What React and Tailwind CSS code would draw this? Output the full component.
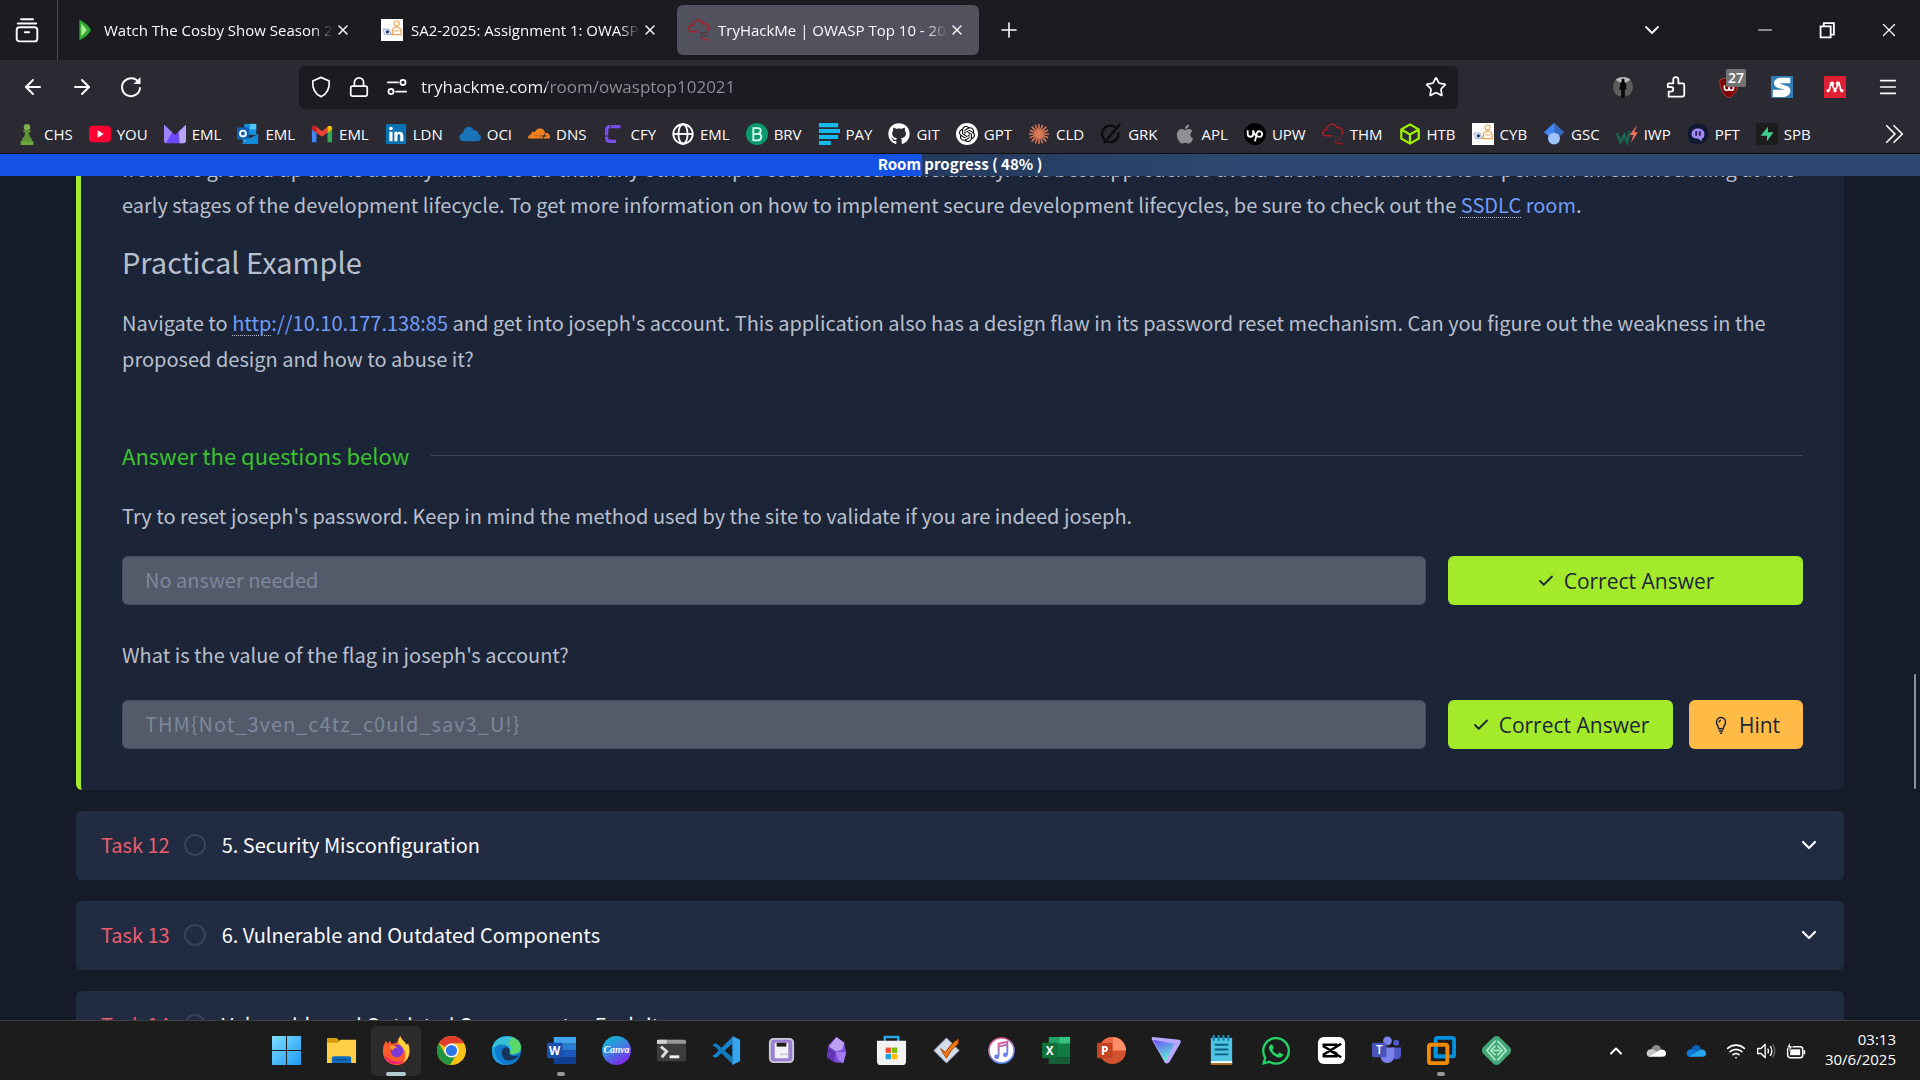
import React from "react";
import { FaApple, FaCloudflare, FaGithub, FaWhatsapp } from "react-icons/fa6";
import { SiOpenai } from "react-icons/si";
import {
  ArrowLeft,
  ArrowRight,
  Check,
  ChevronDown,
  ChevronUp,
  Lock,
  Menu,
  Minus,
  Plus,
  Star,
  Wifi,
  X,
} from "lucide-react";

/* ---------- small drawings ---------- */

function Svg({ box = 24, className = "size-[22px]", children }) {
  return (
    <svg viewBox={`0 0 ${box} ${box}`} className={className} fill="none" aria-hidden="true">
      {children}
    </svg>
  );
}

const PlayTabIcon = () => (
  <Svg>
    <path d="M6 1C12 4 18 9 18 12C18 15 12 20 6 23Z" fill="#35a838" stroke="#1d7c22" />
    <path d="M8 5L14 12L8 19Z" fill="#a5f08c" />
  </Svg>
);

const CourseIcon = () => (
  <Svg>
    <path d="M0 0H24V24H0Z" fill="#fff" />
    <circle cx="17" cy="5" r="2.800" stroke="#f0a04b" strokeWidth="1.200" />
    <path d="M13 16C11 11 14 9 17 9S23 11 22 17H12L9 14" stroke="#f0a04b" strokeWidth="1.300" />
    <path d="M2 11H9L11 17H4Z" fill="#dbe5f2" stroke="#9db1cc" />
    <circle cx="7" cy="14" r="1.800" fill="#1e3a72" />
    <path d="M14 13H20" stroke="#f0a04b" />
  </Svg>
);

const ThmIcon = () => (
  <Svg>
    <path
      d="M11 14H5C-1 14 0 7 5 7C6 0 15 0 16 5C22 4 24 10 21 13"
      stroke="#a81f28"
      strokeWidth="1.600"
    />
    <path d="M13 15H21M14 18H22" stroke="#563036" strokeWidth="1.600" strokeDasharray="2 1" />
    <path d="M14 20L18 22L23 23" stroke="#a81f28" strokeWidth="1.400" strokeDasharray="3 1" />
  </Svg>
);

const PawnIcon = () => (
  <Svg>
    <circle cx="12" cy="4.500" r="3.500" fill="#7fb24a" />
    <path d="M8 8H16V10H14C14 15 18 17 18 20V23H6V20C6 17 10 15 10 10H8Z" fill="#5f9335" />
    <path d="M5 20H19V24H5Z" fill="#6ea53f" />
  </Svg>
);

const YouTubeIcon = () => (
  <Svg>
    <rect x="0" y="3" width="24" height="18" rx="4" fill="#ff0033" />
    <path d="M9.500 8L16 12L9.500 16Z" fill="#fff" />
  </Svg>
);

const ProtonMailIcon = () => (
  <Svg>
    <path d="M0 2L12 13L24 2V19C24 21 23 22 21 22H3C1 22 0 21 0 19Z" fill="#6d4aff" />
    <path d="M16 9.500L24 2V19C24 21 23 22 21 22H17Z" fill="#b9a5f7" />
    <path d="M0 2L9 10L2 22C1 22 0 21 0 19Z" fill="#9b83f5" />
  </Svg>
);

const OutlookIcon = () => (
  <Svg>
    <path d="M8 1H21V13H8Z" fill="#1490df" />
    <path d="M14 1H21V7H14Z" fill="#50c7f5" />
    <path d="M5 12L14 17L23 12V22H7Z" fill="#28a8ea" />
    <path d="M5 22L23 12V23H7Z" fill="#1688d9" />
    <rect x="0" y="5" width="13" height="13" rx="1" fill="#0f64b5" />
    <circle cx="6.500" cy="11.500" r="3.200" stroke="#fff" strokeWidth="2" />
  </Svg>
);

const GmailIcon = () => (
  <Svg>
    <path d="M1 5V21H6V9Z" fill="#4285f4" />
    <path d="M18 9V21H23V5Z" fill="#34a853" />
    <path d="M1 5C1 3 4 2 6 4L12 9L18 4V10L12 15L1 7Z" fill="#ea4335" />
    <path d="M18 4C20 2 23 3 23 5V7L18 11Z" fill="#fbbc04" />
    <path d="M1 5C1 3 4 2 6 4V11L1 7Z" fill="#c5221f" />
  </Svg>
);

const LinkedInIcon = () => (
  <Svg>
    <rect x="1" y="1" width="22" height="22" rx="1" fill="#0a72b1" />
    <circle cx="6.500" cy="6" r="2" fill="#fff" />
    <path
      d="M4.800 9.500H8.200V20H4.800ZM10.200 9.500H13.400V11C15 8.500 20 8.700 20 14V20H16.600V14.500C16.600 11 13.600 11.500 13.600 14.500V20H10.200Z"
      fill="#fff"
    />
  </Svg>
);

const CloudIcon = () => (
  <Svg>
    <path d="M5.500 20C-1 20-1 11.500 4.500 11C5 3 14 2 16 8C20 7.500 21 10 21 12C25.500 13 24.500 20 20 20Z" fill="#1a73b8" />
  </Svg>
);

const ClockifyIcon = () => (
  <Svg>
    <path
      d="M20 4H9Q5 4 5 8V16Q5 20 9 20H20"
      stroke="#7a4df0"
      strokeWidth="3.600"
      strokeDasharray="10 1 12 1 14"
    />
  </Svg>
);

const GlobeIcon = () => (
  <Svg>
    <g stroke="#fff" strokeWidth="2">
      <circle cx="12" cy="12" r="10.600" />
      <ellipse cx="12" cy="12" rx="5" ry="10.600" />
      <path d="M1.500 12H22.500" />
    </g>
  </Svg>
);

const BrevoIcon = () => (
  <Svg>
    <circle cx="12" cy="12" r="12" fill="#0b996e" />
    <path d="M8 5.500H13C17 5.500 17 10 14 11.500C18.500 13 17 19 12.500 19H8ZM8 12.500L14 11.500" stroke="#d9fff0" strokeWidth="2" />
  </Svg>
);

const PayIcon = () => (
  <Svg>
    <path d="M1 0H22V4.500H1ZM1 6.500H24V11H1ZM1 13H22V17.500H1ZM1 19.500H14V24H1Z" fill="#14b9ee" />
  </Svg>
);

const GptIcon = () => (
  <span className="flex size-[22px] items-center justify-center rounded-full bg-white text-black">
    <SiOpenai className="size-4" />
  </span>
);

const ClaudeIcon = () => (
  <Svg>
    <g stroke="#d97757" strokeWidth="1.700">
      <path d="M12 1V23M1 12H23M4 4L20 20M20 4L4 20M8 2L16 22M16 2L8 22M2 8L22 16M2 16L22 8" />
    </g>
  </Svg>
);

const GrokIcon = () => (
  <Svg>
    <path d="M17 5A9 9 0 1 0 20 10M4 22L22 1" stroke="#0c0c0f" strokeWidth="2.600" />
  </Svg>
);

const UpworkIcon = () => (
  <Svg>
    <circle cx="12" cy="12" r="12" fill="#000" />
    <path
      d="M4 8V12A3 3 0 0 0 10 12V8C11 13 13 14 14 15M12 20L14 11A3 3 0 1 1 16 15Q14 15 12 12"
      stroke="#fff"
      strokeWidth="2"
    />
  </Svg>
);

const HtbIcon = () => (
  <Svg>
    <path d="M12 1.500L21.500 7V17L12 22.500L2.500 17V7ZM2.500 7L12 12.500L21.500 7M12 12.500V22" stroke="#9fef00" strokeWidth="2.500" strokeLinejoin="round" />
  </Svg>
);

const ScholarIcon = () => (
  <Svg>
    <path d="M12 0L23 10L17 15H7L1 10Z" fill="#4285f4" />
    <path d="M12 0L23 10L17 15L12 9Z" fill="#356ac3" />
    <circle cx="12" cy="17" r="6.500" fill="#a0c3ff" />
  </Svg>
);

const IwpIcon = () => (
  <Svg>
    <path d="M1 11L5 21L9 13L12 21L15 9" stroke="#1c6350" strokeWidth="3" />
    <path d="M23 2L15 13H19L16 22L24 10H20Z" fill="#f2705c" />
  </Svg>
);

const PftIcon = () => (
  <Svg>
    <circle cx="12" cy="12" r="11.500" fill="#111a33" />
    <path d="M5 12C5 4 19 4 19 12C19 16 17 17 16 17V20L12 17C8 17 5 16 5 12Z" fill="#a18af3" />
    <path d="M10 9V14M14 9V14" stroke="#2b2157" strokeWidth="2" />
  </Svg>
);

const SupabaseIcon = () => (
  <Svg>
    <rect width="24" height="24" rx="2" fill="#1c1c1c" />
    <path d="M13 4L5 14H12V20L19 10H13Z" fill="#3ecf8e" />
  </Svg>
);

/* ---------- data ---------- */

const tabs = [
  { title: "Watch The Cosby Show Season 2", Icon: PlayTabIcon },
  { title: "SA2-2025: Assignment 1: OWASP", Icon: CourseIcon },
  { title: "TryHackMe | OWASP Top 10 - 2021", Icon: ThmIcon, active: true },
];

const bookmarks = [
  { name: "CHS", icon: <PawnIcon /> },
  { name: "YOU", icon: <YouTubeIcon /> },
  { name: "EML", icon: <ProtonMailIcon /> },
  { name: "EML", icon: <OutlookIcon /> },
  { name: "EML", icon: <GmailIcon /> },
  { name: "LDN", icon: <LinkedInIcon /> },
  { name: "OCI", icon: <CloudIcon /> },
  { name: "DNS", icon: <FaCloudflare className="size-[22px] text-[#f38020]" /> },
  { name: "CFY", icon: <ClockifyIcon /> },
  { name: "EML", icon: <GlobeIcon /> },
  { name: "BRV", icon: <BrevoIcon /> },
  { name: "PAY", icon: <PayIcon /> },
  { name: "GIT", icon: <FaGithub className="size-[22px] text-white" /> },
  { name: "GPT", icon: <GptIcon /> },
  { name: "CLD", icon: <ClaudeIcon /> },
  { name: "GRK", icon: <GrokIcon /> },
  { name: "APL", icon: <FaApple className="size-[22px] text-[#8e8e93]" /> },
  { name: "UPW", icon: <UpworkIcon /> },
  { name: "THM", icon: <ThmIcon /> },
  { name: "HTB", icon: <HtbIcon /> },
  { name: "CYB", icon: <CourseIcon /> },
  { name: "GSC", icon: <ScholarIcon /> },
  { name: "IWP", icon: <IwpIcon /> },
  { name: "PFT", icon: <PftIcon /> },
  { name: "SPB", icon: <SupabaseIcon /> },
];

const tasks = [
  { label: "Task 12", title: "5. Security Misconfiguration" },
  { label: "Task 13", title: "6. Vulnerable and Outdated Components" },
  { label: "Task 14", title: "Vulnerable and Outdated Components - Exploit" },
];

/* ---------- browser ---------- */

function TabStrip() {
  return (
    <div className="flex h-[60px] shrink-0 items-center bg-[#1c1b22] text-[#fbfbfe]">
      <button aria-label="Recent browsing" className="flex h-full w-[58px] items-center justify-center border-r border-[#4a4a55] pr-1">
        <Svg className="size-[26px]">
          <g stroke="#fbfbfe" strokeWidth="1.800" strokeLinecap="round">
            <rect x="2.500" y="9.500" width="19" height="13" rx="2.500" />
            <path d="M3.500 6H20.500M6.500 2H17.500M10 14H14" />
          </g>
        </Svg>
      </button>
      <div className="flex gap-[5px] pl-[5px]">
        {tabs.map(({ title, Icon, active }) => (
          <div
            key={title}
            className={`flex h-[50px] w-[302px] items-center rounded-md pl-[11px] pr-[14px] ${active ? "bg-[#52525e] shadow" : ""}`}
          >
            <Icon />
            <a
              href="#tab"
              className="ml-2 mr-[2px] min-w-0 flex-1 overflow-hidden whitespace-nowrap text-[15px] leading-6 [mask-image:linear-gradient(to_right,black_91%,transparent)]"
            >
              {title}
            </a>
            <button aria-label="Close tab">
              <X className="size-4" strokeWidth={2} />
            </button>
          </div>
        ))}
      </div>
      <button aria-label="New tab" className="ml-[18px]">
        <Plus className="size-6" strokeWidth={1.6} />
      </button>
      <div className="ml-auto flex items-center pr-5">
        <button aria-label="List all tabs" className="mr-[90px]">
          <ChevronDown className="size-6" strokeWidth={1.8} />
        </button>
        <button aria-label="Minimize" className="mr-10">
          <Minus className="size-[22px]" strokeWidth={1.2} />
        </button>
        <button aria-label="Restore" className="mr-10">
          <Svg>
            <path d="M5 8H16V20H5ZM8.500 8V4.500H19.500V17H16" stroke="#fff" strokeWidth="2" />
          </Svg>
        </button>
        <button aria-label="Close window">
          <X className="size-[22px]" strokeWidth={1.4} />
        </button>
      </div>
    </div>
  );
}

function NavBar() {
  return (
    <div className="flex h-[54px] shrink-0 items-center bg-[#2b2a33] px-[21px] text-[#fbfbfe]">
      <div className="flex w-[278px] gap-[25px]">
        <button aria-label="Back">
          <ArrowLeft className="size-6" strokeWidth={2} />
        </button>
        <button aria-label="Forward">
          <ArrowRight className="size-6" strokeWidth={2} />
        </button>
        <button aria-label="Reload">
          <Svg className="size-6">
            <path d="M20 8A9 9 0 1 0 21 13" stroke="#fbfbfe" strokeWidth="2" strokeLinecap="round" />
            <path d="M21.500 2V9H14.500Z" fill="#fbfbfe" />
          </Svg>
        </button>
      </div>
      <div className="flex h-[43px] flex-1 items-center rounded-md bg-[#1c1b22] px-[11px]">
        <Svg>
          <path
            d="M12 1.500L21 5.500C21.500 14 18 20 12 22.500C6 20 2.500 14 3 5.500Z"
            stroke="#fbfbfe"
            strokeWidth="1.800"
            strokeLinejoin="round"
          />
        </Svg>
        <Lock className="ml-4 size-[22px]" strokeWidth={1.9} />
        <Svg className="ml-4 size-[22px]">
          <g stroke="#fbfbfe" strokeWidth="2" strokeLinecap="round">
            <path d="M2 7H13M11 17H22" />
            <circle cx="18.500" cy="7" r="2.800" />
            <circle cx="5.500" cy="17" r="2.800" />
          </g>
        </Svg>
        <input
          type="text"
          aria-label="Address"
          readOnly
          value="tryhackme.com/room/owasptop102021"
          className="ml-[13px] min-w-0 flex-1 bg-[linear-gradient(to_right,#fbfbfe_125px,#8f8f9b_125px)] bg-clip-text text-[17px] text-transparent outline-none"
        />
        <button aria-label="Bookmark this page">
          <Star className="size-[22px]" strokeWidth={1.9} />
        </button>
      </div>
      <div className="flex w-[441px] shrink-0 items-center justify-end gap-[31px]">
        <button aria-label="Profile extension">
          <Svg>
            <circle cx="12" cy="12" r="11" fill="#5d5d5d" />
            <path d="M4 4C8 0 16 0 20 4L12 9Z" fill="#bbb" />
            <path d="M9 9C9 7 10 7 10.500 6V3H13.500V6C14 7 15 7 15.500 9V15H14V24H10V15H8Z" fill="#080808" />
          </Svg>
        </button>
        <button aria-label="Extensions">
          <Svg>
            <path
              d="M4 22.500V17H6.500A2.500 2.500 0 0 0 6.500 12H3V9.500Q3 8 4.500 8H9V4A2.800 2.800 0 0 1 14.600 4V8H19.500Q21 8 21 9.500V20Q21 22.500 19 22.500Z"
              stroke="#fbfbfe"
              strokeWidth="2"
              strokeLinejoin="round"
            />
          </Svg>
        </button>
        <button aria-label="uBlock" className="relative">
          <Svg>
            <path d="M12 1L22 4C22 15 19 20 12 24C5 20 2 15 2 4Z" fill="#800000" stroke="#a44" />
            <path d="M7 10V13A2.500 2.500 0 0 0 12 13V10M12 13A2.500 2.500 0 0 0 17 13A3 3 0 0 0 14 10" stroke="#fff" strokeWidth="1.700" />
          </Svg>
          <span className="absolute -top-[7px] left-2 rounded-xs bg-[#737373] px-[2px] text-[14px] leading-[18px] font-semibold">27</span>
        </button>
        <button aria-label="Scribe">
          <Svg>
            <rect width="24" height="24" fill="#2f7eb8" />
            <path d="M21 2H10C2 3 1 11 8 13L15 15H2V23H14C23 22 23 12 17 11L9 8H21Z" fill="#fff" />
          </Svg>
        </button>
        <button aria-label="Mendeley">
          <Svg>
            <rect width="24" height="24" fill="#e01f33" />
            <circle cx="8.700" cy="8.500" r="2.500" fill="#fff" />
            <circle cx="15.300" cy="8.500" r="2.500" fill="#fff" />
            <path d="M6.500 10Q7 14 5 16M17.500 10Q17 14 19 16M8.700 10L12 15.500L15.300 10" stroke="#fff" strokeWidth="1.800" />
            <circle cx="4.500" cy="16" r="1.800" fill="#fff" />
            <circle cx="12" cy="16" r="1.800" fill="#fff" />
            <circle cx="19.500" cy="16" r="1.800" fill="#fff" />
          </Svg>
        </button>
        <button aria-label="Menu">
          <Menu className="size-[22px]" strokeWidth={1.8} />
        </button>
      </div>
    </div>
  );
}

function BookmarksBar() {
  return (
    <nav className="flex h-10 shrink-0 items-center border-b border-[#0c0c0d] bg-[#2b2a33] pt-px pl-4 pr-[15px] text-[15px] text-[#fbfbfe]">
      <div className="flex flex-1 gap-4">
        {bookmarks.map(({ name, icon }, i) => (
          <a key={i} href="#bookmark" className="flex items-center gap-[6px]">
            {icon}
            {name}
          </a>
        ))}
      </div>
      <button aria-label="More bookmarks">
        <Svg>
          <path d="M4 3L13 12L4 21M12 3L21 12L12 21" stroke="#fbfbfe" strokeWidth="1.800" strokeLinecap="round" />
        </Svg>
      </button>
    </nav>
  );
}

/* ---------- room page ---------- */

// glossary words inside links carry a dotted line
const Term = ({ children }) => (
  <span className="underline decoration-[#b8bfcc] decoration-dotted decoration-1 underline-offset-4">{children}</span>
);

function CorrectButton({ className }) {
  return (
    <button
      className={`flex h-[49px] items-center justify-center gap-[9px] rounded-md bg-[#a3ea2a] text-[21px] text-[#1c2538] ${className}`}
    >
      <Check className="size-[18px]" strokeWidth={2.4} />
      Correct Answer
    </button>
  );
}

function RoomTask() {
  return (
    <section className="-mt-[25px] rounded-md border-l-5 border-[#a3ea2a] bg-[#1c2538] px-[41px] pb-[41px] text-xl leading-9 text-[#b8bfcc]">
      <p>
        from the ground up and is usually harder to do than any other simple code-related vulnerability. The best
        approach to avoid such vulnerabilities is to perform threat modelling at the early stages of the development
        lifecycle. To get more information on how to implement secure development lifecycles, be sure to check out the{" "}
        <a href="#ssdlc" className="text-[#719cf9]">
          <Term>SSDLC</Term> room
        </a>
        .
      </p>
      <h3 className="mt-[15px] text-[29px] leading-[46px]">Practical Example</h3>
      <p className="mt-[21px]">
        Navigate to{" "}
        <a href="#machine" className="text-[#719cf9]">
          <Term>http</Term>://10.10.177.138:85
        </a>{" "}
        and get into joseph's account. This application also has a design flaw in its password reset mechanism. Can you
        figure out the weakness in the proposed design and how to abuse it?
      </p>

      <div className="mt-[60px] flex items-center gap-[22px]">
        <h4 className="text-[22px] text-[#3bc42b]">Answer the questions below</h4>
        <hr className="flex-1 border-[#40485a]" />
      </div>

      <label htmlFor="answer-1" className="mt-[25px] block">
        Try to reset joseph's password. Keep in mind the method used by the site to validate if you are indeed joseph.
      </label>
      <div className="mt-[22px] flex gap-[22px]">
        <input
          id="answer-1"
          type="text"
          disabled
          placeholder="No answer needed"
          className="h-[49px] min-w-0 flex-1 rounded-md border border-[#464e5f] bg-[#535b6a] px-[22px] pb-[2px] placeholder:text-[#7d8799]"
        />
        <CorrectButton className="w-[355px] font-['Open_Sans',sans-serif]" />
      </div>

      <label htmlFor="answer-2" className="mt-8 block">
        What is the value of the flag in joseph's account?
      </label>
      <div className="mt-[27px] flex gap-[22px]">
        <input
          id="answer-2"
          type="text"
          disabled
          value="THM{Not_3ven_c4tz_c0uld_sav3_U!}"
          className="h-[49px] min-w-0 flex-1 rounded-md border border-[#464e5f] bg-[#535b6a] px-[22px] pb-[2px] tracking-wider text-[#7d8799]"
        />
        <div className="flex w-[355px] gap-4 font-['Open_Sans',sans-serif]">
          <CorrectButton className="flex-1" />
          <button className="flex h-[49px] w-[114px] items-center justify-center gap-[9px] rounded-md bg-[#ffbb45] text-[21px] text-[#1c2538]">
            <Svg className="size-[18px]">
              <path
                d="M9 17C9 13.500 6 12 6 8.500C6 0 18 0 18 8.500C18 12 15 13.500 15 17ZM9 20H15M10.500 23H13.500M9.500 8.500Q9.500 6 12 5.500"
                stroke="currentColor"
                strokeWidth="2"
              />
            </Svg>
            Hint
          </button>
        </div>
      </div>
    </section>
  );
}

function RoomPage() {
  return (
    <main className="relative min-h-0 flex-1 overflow-hidden bg-[#161b2a] px-[76px] font-['Noto_Sans_CJK_SC',sans-serif]">
      <RoomTask />
      <div className="mt-[21px] flex flex-col gap-[21px]">
        {tasks.map((task) => (
          <button
            key={task.label}
            className="flex h-[69px] items-center rounded-md bg-[#212c42] pr-[23px] pb-px pl-[25px] text-xl leading-9 text-[#f9f9fb]"
          >
            <span className="text-[#ec5c6c]">{task.label}</span>
            <span className="mr-4 ml-[14px] size-[22px] rounded-full border-2 border-[#39445a]" />
            {task.title}
            <ChevronDown className="ml-auto size-6" strokeWidth={2.2} />
          </button>
        ))}
      </div>
      {/* scroll thumb */}
      <div className="absolute top-[498px] right-1 h-[115px] w-[2px] rounded-full bg-[#8f8f98]" />
    </main>
  );
}

/* ---------- Windows taskbar ---------- */

const LETTER_FONT = "Open Sans, sans-serif";

const apps = [
  {
    name: "Start",
    art: (
      <>
        <defs>
          <linearGradient id="start" x1="0" y1="0" x2="1" y2="1">
            <stop offset="0" stopColor="#7fdcff" />
            <stop offset="1" stopColor="#1e9bf2" />
          </linearGradient>
        </defs>
        <path d="M1 1H15.500V15.500H1ZM16.500 1H31V15.500H16.500ZM1 16.500H15.500V31H1ZM16.500 16.500H31V31H16.500Z" fill="url(#start)" />
      </>
    ),
  },
  {
    name: "File Explorer",
    art: (
      <>
        <path d="M1 3H11L14 6V12H1Z" fill="#d99b0b" />
        <path d="M1 8H12L15 5H31V29H1Z" fill="#ffcf48" />
        <path d="M6 29V24Q6 22 8 22H24Q26 22 26 24V29Z" fill="#0f6cbd" />
        <path d="M10 25.500H22" stroke="#0a4f8c" strokeWidth="1.500" />
      </>
    ),
  },
  {
    name: "Firefox",
    active: true,
    art: (
      <>
        <path
          d="M2 17C2 11 4 8 5 6L7 9L9 6L11 9C14 9 17 8 18 4L20 1C21 6 25 6 26 10L28 9C32 20 27 31 16 31C8 31 2 25 2 17Z"
          fill="#ff5a2b"
        />
        <path d="M20 1C21 6 25 6 26 10L28 9C31 17 29 25 23 28C28 20 24 13 18 9Q17 5 20 1Z" fill="#ffd53b" />
        <path d="M3 20C5 30 17 33 24 27C15 29 6 25 3 20Z" fill="#f0216f" />
        <circle cx="16.500" cy="16.500" r="6.500" fill="#7a3bd6" />
        <path d="M8 12Q13 9 17 13Q13 13 12 16Q10 14 8 12Z" fill="#ff9a2e" />
      </>
    ),
  },
  {
    name: "Chrome",
    art: (
      <>
        <circle cx="16" cy="16" r="15" fill="#fbc116" />
        <path d="M16 16L3 8.500A15 15 0 0 1 29 8.500H16Z" fill="#e33b2e" />
        <path d="M3 8.500A15 15 0 0 0 14.500 31L21 20L16 16L9.500 19.500Z" fill="#24963f" />
        <circle cx="16" cy="16" r="7.300" fill="#fff" />
        <circle cx="16" cy="16" r="5.800" fill="#2f76e8" />
      </>
    ),
  },
  {
    name: "Edge",
    art: (
      <>
        <circle cx="16" cy="16" r="15" fill="#117acb" />
        <path d="M1 16C1 -3 31 -3 31 13C31 20 22 21 19 19C22 11 12 8 6 11Q2 13 1 16Z" fill="#35c0d8" />
        <path d="M21 2C28 4 31 9 31 13C31 20 22 21 19 19Q23 13 18 9Z" fill="#5bd96a" />
        <path d="M11 17C13 10 21 12 19 19C21 22 25 22 29 21C25 27 16 28 13 24Q11 21 11 17Z" fill="#15365c" />
        <path d="M6 11C1 15 6 29 17 31C3 31 1 22 1 16Q2 13 6 11Z" fill="#1b9de2" />
      </>
    ),
  },
  {
    name: "Word",
    running: true,
    art: (
      <>
        <path d="M8 2H31V9H8Z" fill="#41a5ee" />
        <path d="M8 9H31V16H8Z" fill="#2b7cd3" />
        <path d="M8 16H31V23H8Z" fill="#185abd" />
        <path d="M8 23H31V30H8Z" fill="#103f91" />
        <rect x="1" y="8" width="16" height="16" rx="1.500" fill="#1a4fae" />
        <text x="9" y="20.500" fontSize="12" fontWeight="700" textAnchor="middle" fontFamily={LETTER_FONT} fill="#fff">W</text>
      </>
    ),
  },
  {
    name: "Canva",
    art: (
      <>
        <defs>
          <linearGradient id="canva" x1="0" y1="0" x2="0.6" y2="1">
            <stop offset="0" stopColor="#00c4cc" />
            <stop offset="0.5" stopColor="#3a88e0" />
            <stop offset="1" stopColor="#7d2ae8" />
          </linearGradient>
        </defs>
        <circle cx="16" cy="16" r="15" fill="url(#canva)" />
        <text x="16" y="19" fontSize="10" fontStyle="italic" fontWeight="700" textAnchor="middle" fontFamily="Liberation Serif, serif" fill="#fff">Canva</text>
      </>
    ),
  },
  {
    name: "Terminal",
    art: (
      <>
        <rect x="1" y="5" width="30" height="22" rx="2" fill="#3c3c3c" />
        <path d="M1 9V6Q1 5 3 5H29Q31 5 31 7V9Z" fill="#9a9a9a" />
        <path d="M1 9V6Q1 5 3 5H11V9Z" fill="#d0d0d0" />
        <path d="M5 12L11 17L6 23" stroke="#ddd" strokeWidth="3" />
        <path d="M14 22.500H24" stroke="#f4f4f4" strokeWidth="3" />
      </>
    ),
  },
  {
    name: "Visual Studio Code",
    art: (
      <>
        <path d="M4 20L22 2V9L6 23Q4 24 2 22V21Z" fill="#1a86ce" />
        <path d="M4 12L22 30V23L6 9Q4 8 2 10V11Z" fill="#147ab9" />
        <path d="M22 1L30 5V27L22 31Z" fill="#35a5ee" />
      </>
    ),
  },
  {
    name: "Scale",
    art: (
      <>
        <rect x="4" y="4" width="24" height="24" rx="4" fill="#9b7fd2" stroke="#cfc8dc" strokeWidth="2" />
        <path d="M9 8H23V24H9Z" fill="#f3f1f6" />
        <path d="M11 8H21V12H11Z" fill="#241f16" />
        <path d="M15 20H18M19 20H22" stroke="#c7c2d0" strokeWidth="2" />
      </>
    ),
  },
  {
    name: "Obsidian",
    art: (
      <>
        <path d="M16 2L24 8L26 18L23 29L14 28L6 23L8 10Z" fill="#7d4fd8" />
        <path d="M16 2L24 8L22 15L15 17L8 12Z" fill="#b9a0f2" />
        <path d="M15 17L26 18L23 29L18 26Z" fill="#a37df0" />
        <path d="M8 12L15 17L14 28L6 23Z" fill="#6336b8" />
      </>
    ),
  },
  {
    name: "Microsoft Store",
    art: (
      <>
        <path d="M9 8V2H23V8" stroke="#2aa7e6" strokeWidth="2.500" />
        <path d="M1 6H31V27Q31 31 27 31H5Q1 31 1 27Z" fill="#f2f2f2" />
        <path d="M10 13H15.500V18.500H10Z" fill="#e8502f" />
        <path d="M16.500 13H22V18.500H16.500Z" fill="#7fba00" />
        <path d="M10 19.500H15.500V25H10Z" fill="#1a9fe0" />
        <path d="M16.500 19.500H22V25H16.500Z" fill="#ffb900" />
      </>
    ),
  },
  {
    name: "Tasks",
    art: (
      <>
        <path d="M16 3L29 16L16 29L3 16Z" fill="#d5ddeb" stroke="#8e9cb8" />
        <path d="M10 14L15 18Q19 10 28 4V9Q20 15 16 24Q13 20 10 14Z" fill="#f07a12" stroke="#a33b05" />
      </>
    ),
  },
  {
    name: "iTunes",
    art: (
      <>
        <defs>
          <linearGradient id="itunes" x1="0" y1="0" x2="0.4" y2="1">
            <stop offset="0" stopColor="#f2537c" />
            <stop offset="1" stopColor="#5b8df2" />
          </linearGradient>
        </defs>
        <circle cx="16" cy="16" r="13" fill="#fff" stroke="url(#itunes)" strokeWidth="1.600" />
        <path d="M13 22V9L22 7V20M13 12L22 10" stroke="url(#itunes)" strokeWidth="2" />
        <circle cx="11" cy="22.500" r="2.500" fill="#6a7df0" />
        <circle cx="20" cy="20.500" r="2.500" fill="#6a7df0" />
      </>
    ),
  },
  {
    name: "Excel",
    art: (
      <>
        <path d="M8 2H30V9H8Z" fill="#21a366" />
        <path d="M19 2H30V9H19Z" fill="#33c481" />
        <path d="M8 9H30V23H8Z" fill="#107c41" />
        <path d="M8 23H30V30H8Z" fill="#185c37" />
        <rect x="1" y="8" width="16" height="16" rx="1.500" fill="#0f7038" />
        <text x="9" y="20.500" fontSize="12" fontWeight="700" textAnchor="middle" fontFamily={LETTER_FONT} fill="#fff">X</text>
      </>
    ),
  },
  {
    name: "PowerPoint",
    art: (
      <>
        <circle cx="17" cy="16" r="14" fill="#d35230" />
        <path d="M17 2A14 14 0 0 1 31 16H17Z" fill="#ff8f6b" />
        <path d="M17 2A14 14 0 0 0 3 16H17Z" fill="#ed6c47" />
        <rect x="1" y="8" width="16" height="16" rx="1.500" fill="#c2431f" />
        <text x="9" y="20.500" fontSize="12" fontWeight="700" textAnchor="middle" fontFamily={LETTER_FONT} fill="#fff">P</text>
      </>
    ),
  },
  {
    name: "Proton VPN",
    art: (
      <>
        <defs>
          <linearGradient id="vpn" x1="0" y1="0" x2="0.4" y2="1">
            <stop offset="0" stopColor="#6a4bff" />
            <stop offset="1" stopColor="#5ef0d0" />
          </linearGradient>
        </defs>
        <path d="M2 2L29 5Q32 6 30 9L19 28Q16 31 14 28L1 5Q0 2 2 2Z" fill="#b9a8ff" />
        <path d="M2 5L24 9L15 28Z" fill="url(#vpn)" />
      </>
    ),
  },
  {
    name: "Notepad",
    art: (
      <>
        <path d="M5 3H27V30H5Z" fill="#4fc3e2" />
        <path d="M5 27H27V29H5Z" fill="#fff" />
        <path d="M5 29H27V31H5Z" fill="#b06a1b" />
        <path d="M9 10H23M9 15H23M9 20H23" stroke="#0c5f86" strokeWidth="2" />
        <path d="M8 1V5M13 1V5M18 1V5M23 1V5" stroke="#1987b0" strokeWidth="2.500" strokeLinecap="round" />
      </>
    ),
  },
  { name: "WhatsApp", icon: <FaWhatsapp className="size-8 text-[#25d366]" /> },
  {
    name: "CapCut",
    art: (
      <>
        <rect x="2" y="2" width="28" height="28" rx="6" fill="#fff" />
        <path d="M26 9L8 20V22H21V19L8 12V10H21V13M26 23L14 16" stroke="#000" strokeWidth="2.500" />
      </>
    ),
  },
  {
    name: "Teams",
    art: (
      <>
        <circle cx="17" cy="6" r="4.500" fill="#7b83eb" />
        <circle cx="26" cy="8" r="3" fill="#5059c9" />
        <path d="M22 13H31V21Q30 26 25 25H22Z" fill="#5059c9" />
        <path d="M10 13H24V22Q23 29 17 29Q10 29 10 22Z" fill="#7b83eb" />
        <rect x="1" y="8" width="15" height="15" rx="1.500" fill="#4b53bc" />
        <text x="8.500" y="20" fontSize="12" fontWeight="600" textAnchor="middle" fontFamily={LETTER_FONT} fill="#fff">T</text>
      </>
    ),
  },
  {
    name: "VMware",
    running: true,
    art: (
      <>
        <rect x="10" y="3" width="19" height="19" rx="2" stroke="#0091da" strokeWidth="4" />
        <rect x="3" y="10" width="19" height="19" rx="2" stroke="#f38b00" strokeWidth="4" />
        <path d="M10 12V22H20" stroke="#0091da" strokeWidth="4" />
      </>
    ),
  },
  {
    name: "Diamond",
    art: (
      <>
        <path d="M13 2Q16 0 19 2L30 13Q32 16 30 19L19 30Q16 32 13 30L2 19Q0 16 2 13Z" fill="#45a878" />
        <path d="M15 6L6 16L15 26M17 6L26 16L17 26M15 11L10 16L15 21M17 11L22 16L17 21M12 16H20" stroke="#b9ecd0" strokeWidth="1.500" />
      </>
    ),
  },
];

const OneDriveIcon = ({ back, mid, front }) => (
  <Svg className="size-5">
    <path d="M6 11C8 3 17 3 18 10L12 16Z" fill={back} />
    <path d="M4 19C-1 18 0 10 6 10Q9 9 13 13L6 19Z" fill={mid} />
    <path d="M4 19L16 11C21 8 25 13 24 16Q23 19 20 19Z" fill={front} />
  </Svg>
);

function Taskbar() {
  return (
    <footer className="flex h-[60px] shrink-0 items-center border-t border-[#3a3f40] bg-[#1c1c1c] pr-6 pl-[261px] text-white">
      <div className="flex flex-1 gap-[5px]">
        {apps.map((app) => (
          <button
            key={app.name}
            aria-label={app.name}
            className={`relative flex size-[50px] shrink-0 items-center justify-center rounded-md ${app.active ? "bg-[#2b2b2b]" : ""}`}
          >
            {app.icon || (
              <Svg box={32} className="size-[31px]">
                {app.art}
              </Svg>
            )}
            {app.active && <span className="absolute bottom-0 h-1 w-5 rounded-full bg-[#b3ccd1]" />}
            {app.running && <span className="absolute bottom-0 h-1 w-2 rounded-full bg-[#9a9a9a]" />}
          </button>
        ))}
      </div>
      <div className="flex shrink-0 items-center">
        <button aria-label="Show hidden icons" className="mr-5">
          <ChevronUp className="size-5" strokeWidth={2.4} />
        </button>
        <button aria-label="OneDrive personal" className="mr-5">
          <OneDriveIcon back="#8b8b8b" mid="#c9c9c9" front="#ffffff" />
        </button>
        <button aria-label="OneDrive work" className="mr-5">
          <OneDriveIcon back="#0a62b8" mid="#0f78d4" front="#28a8ea" />
        </button>
        <button aria-label="Network, volume and battery" className="flex gap-[10px]">
          <Wifi className="size-5" strokeWidth={2} />
          <Svg className="size-5">
            <path d="M2 9H6L11 4V20L6 15H2Z" stroke="#fff" strokeWidth="1.600" strokeLinejoin="round" />
            <path d="M14 9Q16 12 14 15M17 6Q21 12 17 18" stroke="#fff" strokeWidth="1.600" />
            <path d="M20 4Q25 12 20 20" stroke="#666" strokeWidth="1.600" />
          </Svg>
          <Svg className="size-5">
            <rect x="2" y="7" width="18" height="13" rx="3" stroke="#fff" strokeWidth="1.800" />
            <rect x="5" y="10" width="12" height="7" fill="#fff" />
            <path d="M21 11H23V16H21Z" fill="#fff" />
            <path d="M5 1L1 8H4L3 14L8 6H5Z" fill="#fff" stroke="#1c1c1c" strokeWidth="0.800" />
          </Svg>
        </button>
        <div className="w-[90px] pb-[3px] text-right text-[15px] leading-5">
          <div>03:13</div>
          <div>30/6/2025</div>
        </div>
      </div>
    </footer>
  );
}

export default function App() {
  return (
    <div className="flex h-screen flex-col overflow-hidden bg-[#161b2a] font-['Open_Sans',sans-serif]">
      <TabStrip />
      <NavBar />
      <BookmarksBar />
      <div className="relative z-10 h-[22px] shrink-0 bg-[linear-gradient(to_right,#1352e4_48%,#24395c_48%,#2d4870_65%)] text-center font-['Noto_Sans_CJK_SC',sans-serif] text-[15px] leading-5 font-bold text-white">
        Room progress ( 48% )
      </div>
      <RoomPage />
      <Taskbar />
    </div>
  );
}
